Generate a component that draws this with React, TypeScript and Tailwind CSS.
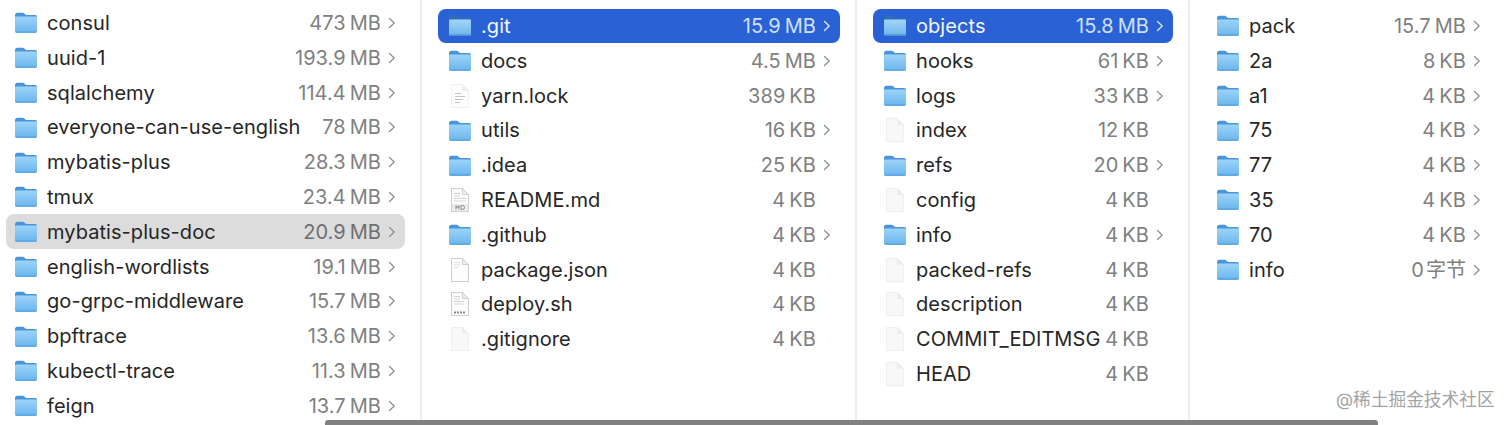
import React from "react";

type Kind = "folder" | "text" | "md" | "blank" | "sh" | "plain";
type Item = { name: string; num: string; unit: string; kind: Kind; state?: "active" | "muted" };

const Folder = ({ id, active }: { id: string; active?: boolean }) => (
  <svg width="24" height="23" viewBox="0 0 24 23" className="shrink-0">
    <defs>
      <linearGradient id={id} x1="0" y1="0" x2="0" y2="1">
        <stop offset="0" stopColor={active ? "#a2d6f8" : "#9dd3f8"} />
        <stop offset="1" stopColor={active ? "#6cb4e9" : "#6ab6ee"} />
      </linearGradient>
    </defs>
    <path d="M1 4.2C1 2.6 1.9 1.7 3.2 1.7h5.2c1 0 1.5.4 2.1 1l.8.8c.4.3.7.5 1.3.5h8.6c1.2 0 1.8.8 1.8 2V8H1z" fill={active ? "#2f6fb8" : "#4a94d9"} />
    <path d="M1 6.6c0-.7.5-1.2 1.2-1.2h19.6c.7 0 1.2.5 1.2 1.2v13.4c0 1.1-.7 1.8-1.8 1.8H2.8C1.7 21.8 1 21.1 1 20z" fill={`url(#${id})`} />
    <path d="M1.2 20.4c.2.8.8 1.4 1.6 1.4h18.4c.8 0 1.4-.6 1.6-1.4z" fill={active ? "#4a8fd0" : "#559fdf"} />
  </svg>
);

const FileIcon = ({ kind }: { kind: Kind }) => {
  const stroke = kind === "plain" || kind === "text" ? "#efefef" : "#cfcfcf";
  return (
    <svg width="24" height="26" viewBox="0 0 24 26" className="shrink-0">
      <path d="M3.5 1.5h11l6 6v17h-17z" fill={kind === "plain" ? "#f8f8f8" : "#fdfdfd"} stroke={stroke} strokeWidth="1" />
      <path d="M14.5 1.5v6h6z" fill="#eeeeee" stroke={stroke} strokeWidth="1" strokeLinejoin="round" />
      {kind === "text" && (
        <g stroke="#c4c4c4" strokeWidth="1">
          <path d="M7 10.5h6M7 13.5h10M7 16.5h8M7 19.5h5" />
        </g>
      )}
      {kind === "md" && (
        <g>
          <path d="M6 6.5h6M6 9h6M6 11.5h12M6 14h12" stroke="#d4d4d4" strokeWidth="1" />
          <rect x="4" y="17" width="16" height="7" fill="#ededed" />
          <path d="M8 22.5v-4l1.5 2.5 1.5-2.5v4M13 18.5v4h1.5a2 2 0 0 0 0-4z" fill="none" stroke="#777" strokeWidth=".8" />
        </g>
      )}
      {kind === "blank" && <path d="M6 5.5h6M6 8h6M6 10.5h4" stroke="#dedede" strokeWidth="1" />}
      {kind === "sh" && (
        <g>
          <path d="M6 5.5h6M6 8h6M6 10.5h10M6 13h10" stroke="#d4d4d4" strokeWidth="1" />
          <path d="M6 21.5h12" stroke="#8a8a8a" strokeWidth="2" strokeDasharray="2 1" />
        </g>
      )}
    </svg>
  );
};

const Chevron = ({ color }: { color: string }) => (
  <svg width="8" height="12" viewBox="0 0 8 12" fill="none" className="shrink-0">
    <path d="M1.5 1.5 6.2 6l-4.7 4.5" stroke={color} strokeWidth="1.2" strokeLinecap="round" strokeLinejoin="round" />
  </svg>
);

const f = (name: string, num: string, unit: string, state?: "active" | "muted"): Item => ({ name, num, unit, kind: "folder", state });
const d = (kind: Kind, name: string, num: string, unit: string): Item => ({ name, num, unit, kind });

const col1: Item[] = [
  f("consul", "473", "MB"),
  f("uuid-1", "193.9", "MB"),
  f("sqlalchemy", "114.4", "MB"),
  f("everyone-can-use-english", "78", "MB"),
  f("mybatis-plus", "28.3", "MB"),
  f("tmux", "23.4", "MB"),
  f("mybatis-plus-doc", "20.9", "MB", "muted"),
  f("english-wordlists", "19.1", "MB"),
  f("go-grpc-middleware", "15.7", "MB"),
  f("bpftrace", "13.6", "MB"),
  f("kubectl-trace", "11.3", "MB"),
  f("feign", "13.7", "MB"),
];
const col2: Item[] = [
  f(".git", "15.9", "MB", "active"),
  f("docs", "4.5", "MB"),
  d("text", "yarn.lock", "389", "KB"),
  f("utils", "16", "KB"),
  f(".idea", "25", "KB"),
  d("md", "README.md", "4", "KB"),
  f(".github", "4", "KB"),
  d("blank", "package.json", "4", "KB"),
  d("sh", "deploy.sh", "4", "KB"),
  d("plain", ".gitignore", "4", "KB"),
];
const col3: Item[] = [
  f("objects", "15.8", "MB", "active"),
  f("hooks", "61", "KB"),
  f("logs", "33", "KB"),
  d("plain", "index", "12", "KB"),
  f("refs", "20", "KB"),
  d("plain", "config", "4", "KB"),
  f("info", "4", "KB"),
  d("plain", "packed-refs", "4", "KB"),
  d("plain", "description", "4", "KB"),
  d("plain", "COMMIT_EDITMSG", "4", "KB"),
  d("plain", "HEAD", "4", "KB"),
];
const col4: Item[] = [
  f("pack", "15.7", "MB"),
  f("2a", "8", "KB"),
  f("a1", "4", "KB"),
  f("75", "4", "KB"),
  f("77", "4", "KB"),
  f("35", "4", "KB"),
  f("70", "4", "KB"),
  f("info", "0", "字节"),
];

const Row = ({ item, id, pad }: { item: Item; id: string; pad: string }) => {
  const active = item.state === "active";
  const muted = item.state === "muted";
  const isFolder = item.kind === "folder";
  return (
    <div
      className={`flex h-[34.8px] items-center rounded-[8px] pr-[9px] ${pad} ${
        active ? "bg-[#2a62d6]" : muted ? "bg-[#dcdcdc]" : ""
      }`}
    >
      <div className="flex w-[24px] shrink-0 justify-center">
        {isFolder ? <Folder id={id} active={active} /> : <FileIcon kind={item.kind} />}
      </div>
      <span className={`ml-[9px] whitespace-nowrap ${active ? "text-[#f2f6fe]" : "text-[#262626]"}`}>{item.name}</span>
      <span className={`ml-auto whitespace-nowrap pl-1 ${active ? "text-[#cfe0fa]" : muted ? "text-[#6f6f6f]" : "text-[#808080]"}`}>
        {item.num}
        <span className={item.unit === "字节" ? "ml-[2px]" : "ml-[4px]"}>{item.unit}</span>
      </span>
      <div className="ml-[7px] flex w-[8px] shrink-0 justify-center">
        {isFolder && <Chevron color={active ? "#e3ecfb" : "#8c8c8c"} />}
      </div>
    </div>
  );
};

const Col = ({ items, cls, pre, pad }: { items: Item[]; cls: string; pre: string; pad: string }) => (
  <div className={cls}>
    {items.map((it, i) => (
      <Row key={i} item={it} id={`${pre}${i}`} pad={pad} />
    ))}
  </div>
);

export default function App() {
  return (
    <div
      className="relative flex h-[425px] w-[1512px] overflow-hidden bg-white text-[20px] tracking-[0.06px]"
      style={{ fontFamily: 'Inter, "Noto Sans CJK SC", sans-serif' }}
    >
      <Col pre="a" pad="pl-[8px]" items={col1} cls="h-full w-[422px] shrink-0 border-r-2 border-[#ececec] pl-[6px] pr-[15px] pt-[5.6px]" />
      <Col pre="b" pad="pl-[10px]" items={col2} cls="h-full w-[435px] shrink-0 border-r-2 border-[#ececec] pl-[16px] pr-[15px] pt-[8.6px]" />
      <Col pre="c" pad="pl-[10px]" items={col3} cls="h-full w-[333px] shrink-0 border-r-2 border-[#ececec] pl-[16px] pr-[15px] pt-[8.6px]" />
      <Col pre="d" pad="pl-[9px]" items={col4} cls="h-full w-[300px] shrink-0 pl-[17px] pt-[8.6px]" />
      <div className="absolute bottom-0 left-[325px] h-[5px] w-[1053px] rounded-t-[3px] bg-[#818181]" />
      <div className="absolute left-[1336px] top-[388px] text-[17.7px] leading-[24px] tracking-normal text-[#a3a3a3]">
        @稀土掘金技术社区
      </div>
    </div>
  );
}
